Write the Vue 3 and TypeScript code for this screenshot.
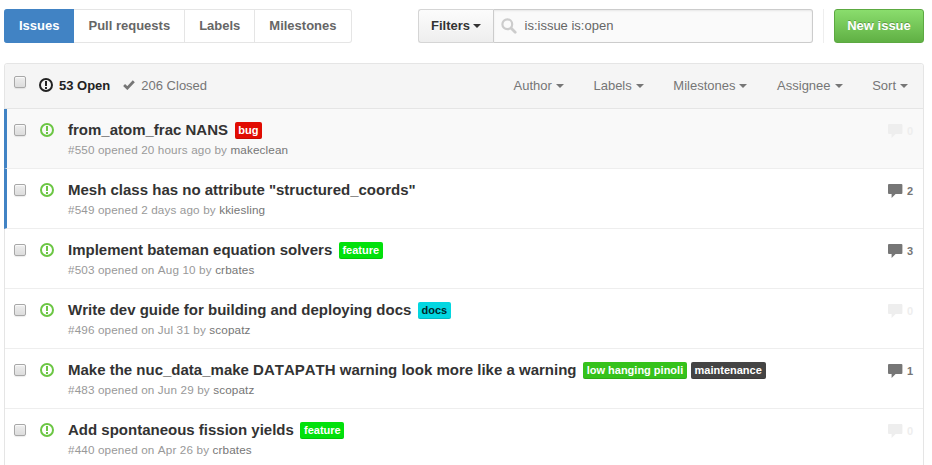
<script setup lang="ts">
interface IssueLabel {
  name: string
  kind: string
}

interface Issue {
  id: number
  title: string
  opened: string
  author: string
  labels: IssueLabel[]
  comments: number
  unread?: boolean
  focused?: boolean
}

const tabs: string[] = ['Issues', 'Pull requests', 'Labels', 'Milestones']
const menus: string[] = ['Author', 'Labels', 'Milestones', 'Assignee', 'Sort']

const issues: Issue[] = [
  { id: 550, title: 'from_atom_frac NANS', opened: '20 hours ago', author: 'makeclean', labels: [{ name: 'bug', kind: 'bug' }], comments: 0, unread: true, focused: true },
  { id: 549, title: 'Mesh class has no attribute "structured_coords"', opened: '2 days ago', author: 'kkiesling', labels: [], comments: 2, unread: true },
  { id: 503, title: 'Implement bateman equation solvers', opened: 'on Aug 10', author: 'crbates', labels: [{ name: 'feature', kind: 'feature' }], comments: 3 },
  { id: 496, title: 'Write dev guide for building and deploying docs', opened: 'on Jul 31', author: 'scopatz', labels: [{ name: 'docs', kind: 'docs' }], comments: 0 },
  {
    id: 483,
    title: 'Make the nuc_data_make DATAPATH warning look more like a warning',
    opened: 'on Jun 29',
    author: 'scopatz',
    labels: [{ name: 'low hanging pinoli', kind: 'easy' }, { name: 'maintenance', kind: 'maintenance' }],
    comments: 1,
  },
  { id: 440, title: 'Add spontaneous fission yields', opened: 'on Apr 26', author: 'crbates', labels: [{ name: 'feature', kind: 'feature' }], comments: 0 },
]
</script>

<template>
  <main class="page">
    <div class="toolbar">
      <nav class="tabs">
        <a v-for="(tab, i) in tabs" :key="tab" class="tab" :class="{ selected: i === 0 }">{{ tab }}</a>
      </nav>
      <div class="search">
        <button class="filters" type="button">Filters<span class="caret"></span></button>
        <div class="query">
          <svg class="magnifier" width="16" height="16" viewBox="0 0 16 16">
            <circle cx="6.3" cy="6.3" r="4.9" fill="none" stroke="#ccc" stroke-width="2.2" />
            <path d="M10 10l4.2 4.2" stroke="#ccc" stroke-width="2.8" stroke-linecap="round" />
          </svg>
          <span>is:issue is:open</span>
        </div>
      </div>
      <div class="divider"></div>
      <button class="new-issue" type="button">New issue</button>
    </div>

    <section class="list">
      <header class="list-header">
        <span class="check header-check"></span>
        <a class="state open">
          <svg class="icon" width="14" height="14" viewBox="0 0 14 14">
            <circle cx="7" cy="7" r="6" fill="none" stroke="currentColor" stroke-width="2" />
            <path d="M6 3h2v5H6zM6 9h2v2H6z" fill="currentColor" />
          </svg>
          53 Open
        </a>
        <a class="state closed">
          <svg class="icon" width="12" height="10" viewBox="0 0 12 10">
            <path d="M1.1 5.1l3.2 3L10.8 1.2" fill="none" stroke="currentColor" stroke-width="2.8" />
          </svg>
          206 Closed
        </a>
        <div class="menus">
          <a v-for="menu in menus" :key="menu" class="menu">{{ menu }}<span class="caret"></span></a>
        </div>
      </header>

      <article
        v-for="issue in issues"
        :key="issue.id"
        class="row"
        :class="{ unread: issue.unread, focused: issue.focused }"
      >
        <span class="check"></span>
        <svg class="icon issue-icon" width="14" height="14" viewBox="0 0 14 14">
          <circle cx="7" cy="7" r="6" fill="none" stroke="currentColor" stroke-width="2" />
          <path d="M6 3h2v5H6zM6 9h2v2H6z" fill="currentColor" />
        </svg>
        <div class="body">
          <div class="headline">
            <a class="title">{{ issue.title }}</a>
            <span v-for="label in issue.labels" :key="label.name" class="label" :class="label.kind">{{ label.name }}</span>
          </div>
          <div class="meta">#{{ issue.id }} opened {{ issue.opened }} by <a class="author">{{ issue.author }}</a></div>
        </div>
        <a class="comments" :class="{ none: issue.comments === 0 }">
          <svg class="icon" width="15" height="14" viewBox="0 0 15 14">
            <path d="M1 0h12.4q1 0 1 1v8q0 1-1 1H7.6L3.6 14V10H1Q0 10 0 9V1q0-1 1-1z" fill="currentColor" />
          </svg>
          <span>{{ issue.comments }}</span>
        </a>
      </article>
    </section>
  </main>
</template>

<style>
body {
  overflow: hidden;
  background: #fff;
}
</style>

<style scoped>
.page {
  box-sizing: border-box;
  height: 465px;
  overflow: hidden;
  padding: 9px 8px 0 4px;
  font: 13px/20px "Liberation Sans", Arial, sans-serif;
  font-kerning: none;
  color: #333;
}
.page * {
  box-sizing: border-box;
}
.icon {
  display: block;
  flex: none;
}
.toolbar {
  display: flex;
  height: 34px;
}
.tabs {
  display: flex;
}
.tab {
  padding: 6px 14px 0 14px;
  border: 1px solid #e5e5e5;
  border-left: 0;
  font-weight: bold;
  color: #666;
}
.tab.selected {
  padding-left: 15px;
  border-color: #4183c4;
  border-radius: 3px 0 0 3px;
  background: #4183c4;
  color: #fff;
}
.tab:last-child {
  border-radius: 0 3px 3px 0;
}
.search {
  display: flex;
  width: 395px;
  margin-left: auto;
}
.filters {
  display: flex;
  align-items: center;
  width: 76px;
  padding: 0 0 1px 12px;
  border: 1px solid #d5d5d5;
  border-right: 1px solid #ccc;
  border-radius: 3px 0 0 3px;
  background: linear-gradient(#fcfcfc, #eee);
  font: bold 13px/20px "Liberation Sans", Arial, sans-serif;
  color: #333;
  text-shadow: 0 1px 0 rgba(255, 255, 255, 0.9);
}
.caret {
  display: inline-block;
  margin-left: 4px;
  border: 4px solid transparent;
  border-top-color: currentColor;
  border-bottom: 0;
  vertical-align: 2px;
}
.filters .caret {
  margin-left: 3px;
}
.query {
  display: flex;
  flex: 1;
  padding: 6px 0 0 7px;
  border: 1px solid #ccc;
  border-left: 0;
  border-radius: 0 3px 3px 0;
  background: #fafafa;
  box-shadow: inset 0 1px 2px rgba(0, 0, 0, 0.075);
  color: #666;
}
.magnifier {
  flex: none;
  margin: 2px 7.5px 0 0;
}
.divider {
  width: 1px;
  margin: 0 10px;
  background: #eee;
}
.new-issue {
  width: 90px;
  padding: 0 0 1px;
  border: 1px solid #5ca941;
  border-radius: 3px;
  background: linear-gradient(#8add6d, #60b044);
  font: bold 13px/20px "Liberation Sans", Arial, sans-serif;
  color: #fff;
  text-shadow: 0 -1px 0 rgba(0, 0, 0, 0.25);
}
.list {
  margin-top: 20px;
  border: 1px solid #e5e5e5;
  border-radius: 3px 3px 0 0;
}
.list-header {
  display: flex;
  height: 45px;
  padding: 12px 15px 0 9px;
  border-bottom: 1px solid #e5e5e5;
  border-radius: 3px 3px 0 0;
  background: #f5f5f5;
}
.check {
  flex: none;
  width: 12px;
  height: 12px;
  margin: 15px 14px 0 9px;
  border: 1px solid #a8a8a8;
  border-radius: 2px;
  background: linear-gradient(#eee, #dcdcdc);
  box-shadow: 0 1px 1px rgba(0, 0, 0, 0.08), inset 0 1px 1px rgba(255, 255, 255, 0.75);
}
.header-check {
  margin: 0 13px 0 0;
}
.state {
  display: flex;
  margin-right: 13px;
  color: #767676;
}
.state .icon {
  margin: 2px 6px 0 0;
}
.state.open {
  font-weight: bold;
  color: #222;
}
.state.closed .icon {
  margin: 4px 6px 0 0;
}
.menus {
  display: flex;
  gap: 29.6px;
  margin-left: auto;
  color: #767676;
}
.row {
  display: flex;
  height: 60px;
  border-bottom: 1px solid #eee;
}
.row.unread {
  margin-left: -1px;
  border-left: 3px solid #4183c4;
}
.row.unread .check {
  margin-left: 7px;
}
.row.focused {
  background: #f9f9f9;
}
.issue-icon {
  margin-top: 14px;
  color: #6cc644;
}
.body {
  margin-left: 14px;
}
.headline {
  display: flex;
  height: 30px;
  padding-top: 11px;
}
.title {
  margin-right: 2.5px;
  font-size: 15px;
  font-weight: bold;
  white-space: nowrap;
}
.label {
  height: 17px;
  margin: 2px 0 0 4px;
  padding: 0 3.7px;
  border-radius: 2px;
  box-shadow: inset 0 -1px 0 rgba(0, 0, 0, 0.12);
  font-size: 11px;
  font-weight: bold;
  line-height: 16px;
  white-space: nowrap;
  color: #fff;
}
.bug { background: #e10c02; }
.feature { background: #02e10c; }
.docs { background: #02d7e1; color: #00282a; }
.easy { background: #35c21b; }
.maintenance { background: #444; }
.meta {
  font-size: 11.7px;
  letter-spacing: 0.14px;
  line-height: 22px;
  color: #999;
}
.author {
  color: #767676;
}
.comments {
  display: flex;
  margin: 15px 10px 0 auto;
  font-size: 11px;
  font-weight: bold;
  line-height: 14px;
  color: #767676;
}
.comments span {
  margin-left: 4px;
}
.comments.none {
  color: #eee;
}
</style>
